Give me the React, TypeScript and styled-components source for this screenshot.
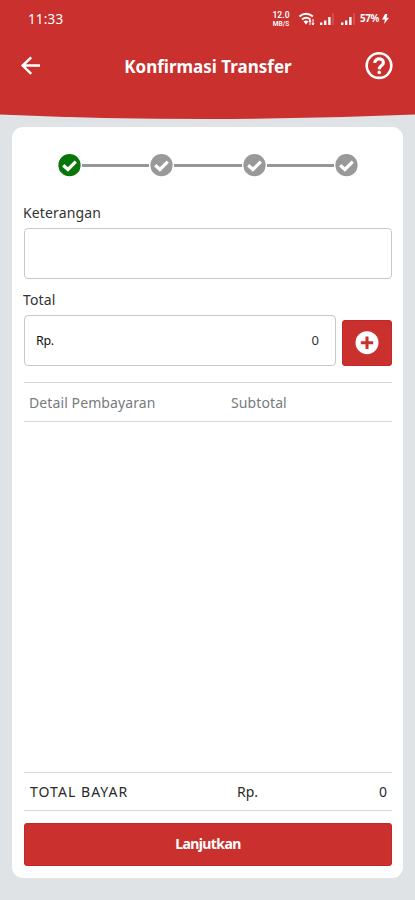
import React from "react";
import styled, { createGlobalStyle } from "styled-components";

const red = "#c9302e";

const GlobalStyle = createGlobalStyle`
  * { box-sizing: border-box; }
  body { margin: 0; background: #dfe3e5; }
  button { font: inherit; border: 0; padding: 0; cursor: pointer; }
`;

const Screen = styled.div`
  width: 415px;
  height: 900px;
  overflow: hidden;
  display: flex;
  flex-direction: column;
  background: #dfe3e5;
  font-family: "Noto Sans", sans-serif;
  color: #333;
`;

const Header = styled.header`
  flex: none;
  height: 119px;
  background: ${red};
  color: #fff;
  clip-path: path("M0 0H415V114.5Q207 123.5 0 114.5Z");
`;

const StatusBar = styled.div`
  height: 38px;
  padding: 0 26px 0 28px;
  display: flex;
  align-items: center;
  justify-content: space-between;
`;

const Clock = styled.span`
  font-size: 13.5px;
  line-height: 18px;
  letter-spacing: 0.15px;
`;

const StatusIcons = styled.div`
  display: flex;
  align-items: center;
  height: 20px;
`;

const Speed = styled.div`
  width: 18px;
  margin-right: 9px;
  display: flex;
  flex-direction: column;
  align-items: center;
  font-family: Roboto, sans-serif;
  font-weight: 600;
`;

const SpeedValue = styled.span`
  font-size: 8.5px;
  line-height: 10px;
`;

const SpeedUnit = styled.span`
  font-size: 6.5px;
  line-height: 8px;
`;

const Battery = styled.span`
  width: 22px;
  font-size: 9.8px;
  font-weight: 700;
  letter-spacing: -0.3px;
  line-height: 14px;
`;

const NavBar = styled.div`
  height: 56px;
  padding: 0 22px 0 20px;
  display: grid;
  grid-template-columns: 30px 1fr 28px;
  align-items: center;
`;

const Title = styled.h1`
  margin: 0;
  padding: 1px 0 0 1px;
  text-align: center;
  font-size: 17px;
  line-height: 24px;
  font-weight: 700;
`;

const IconButton = styled.button`
  display: flex;
  background: none;
  color: #fff;
`;

const Card = styled.main`
  flex: none;
  height: 751px;
  margin: 8px 12px 0;
  padding: 24px 11px 12px 12px;
  border-radius: 11px;
  background: #fff;
  display: flex;
  flex-direction: column;
`;

const Stepper = styled.div`
  height: 28px;
  padding: 0 34px;
  display: flex;
  align-items: center;
`;

const StepLine = styled.i`
  flex: 1;
  height: 3px;
  margin: 0 1px;
  background: #969696;
`;

const StepSvg = styled.svg`
  flex: none;
  width: 23px;
  height: 23px;
`;

const Label = styled.label<{ $top: number }>`
  margin: ${(p) => p.$top}px 0 0 -1px;
  height: 20px;
  font-size: 14px;
  line-height: 20px;
  letter-spacing: 0.15px;
`;

const Field = styled.div`
  height: 51px;
  padding: 0 16px 1px 11px;
  flex: 1;
  display: flex;
  align-items: center;
  justify-content: space-between;
  border: 1px solid #c9c9c9;
  border-radius: 4px;
  font-size: 13px;
`;

const FullField = styled(Field)`
  flex: none;
  margin-top: 5px;
`;

const Currency = styled.span`
  color: #111;
  font-size: 12.5px;
  letter-spacing: -0.4px;
`;

const AmountRow = styled.div`
  display: flex;
  align-items: flex-end;
  gap: 6px;
  margin-top: 5px;
`;

const AddButton = styled.button`
  width: 50px;
  height: 46px;
  display: flex;
  align-items: center;
  justify-content: center;
  border-radius: 4px;
  background: ${red};
  box-shadow: inset 0 0 0 1px #c62626;
`;

const TableRow = styled.div`
  border: solid #d6d8d9;
  border-width: 1px 0;
  display: grid;
  align-items: center;
  font-size: 14px;
`;

const DetailHeader = styled(TableRow)`
  height: 40px;
  margin-top: 16px;
  padding: 0 5px;
  grid-template-columns: 202px 1fr;
  letter-spacing: 0.1px;
  color: #777b7e;
`;

const Summary = styled(TableRow)`
  height: 39px;
  margin-top: auto;
  padding: 0 5px 0 6px;
  grid-template-columns: 207px 1fr auto;
  color: #292929;
`;

const SummaryLabel = styled.span`
  letter-spacing: 1.05px;
`;

const SubmitButton = styled.button`
  margin-top: 12px;
  padding-bottom: 2px;
  height: 43px;
  border-radius: 4px;
  background: ${red};
  box-shadow: inset 0 0 0 1px #c62626;
  color: #fff;
  font-size: 14px;
  font-weight: 700;
  letter-spacing: -0.6px;
`;

const Step = ({ active }: { active?: boolean }) => (
  <StepSvg viewBox="0 0 23 23">
    <circle cx="11.5" cy="11.2" r="11.1" fill={active ? "#087508" : "#999"} />
    <path d="M5.2 11.2L9.9 15.5L17.8 7.6" fill="none" stroke="#fff" strokeWidth="3.2" />
  </StepSvg>
);

const Signal = () => (
  <svg width="21" height="14" viewBox="0 0 21 14">
    <path d="M3.2 13V10.5M7.2 13V8.5M11.4 13V5" stroke="#fff" strokeWidth="2.4" />
    <path d="M15 13V1" stroke="#fff" strokeOpacity=".3" />
  </svg>
);

export default function App() {
  return (
    <>
      <GlobalStyle />
      <Screen>
        <Header>
          <StatusBar>
            <Clock>11:33</Clock>
            <StatusIcons>
              <Speed>
                <SpeedValue>12.0</SpeedValue>
                <SpeedUnit>MB/S</SpeedUnit>
              </Speed>
              <svg width="19" height="14" viewBox="0 0 19 14" fill="none" stroke="#fff">
                <path d="M0.5 4.5Q7 -1 14 4.5M3 7.5Q7.2 4 11.5 7.5" strokeWidth="2" />
                <path d="M4.5 9.5Q7 7.5 9.5 9.5L7 12.5Z" fill="#fff" stroke="none" />
                <path d="M11 13V8M14 7V13M10 10L11 8L12 10M13 11L14 13L15 11" />
              </svg>
              <Signal />
              <Signal />
              <Battery>57%</Battery>
              <svg width="7" height="10" viewBox="0 0 7 10">
                <path d="M3 0L0 5.6H2.8L2.2 10L7 3.8H4.4L5.4 0Z" fill="#fff" />
              </svg>
            </StatusIcons>
          </StatusBar>
          <NavBar>
            <IconButton aria-label="Kembali">
              <svg width="22" height="20" viewBox="0 0 22 20" fill="none" stroke="#fff" strokeWidth="2.5">
                <path d="M20 9.6H3M11.2 1.3L2.7 9.6L11.2 17.9" />
              </svg>
            </IconButton>
            <Title>Konfirmasi Transfer</Title>
            <IconButton aria-label="Bantuan">
              <svg width="28" height="28" viewBox="0 0 28 28" fill="none" stroke="#fff">
                <circle cx="14" cy="13.6" r="12.3" strokeWidth="2.6" />
                <path d="M9.8 11C9.8 5.5 18.4 5.6 18.4 10.7C18.4 13.8 14.3 13.4 14.3 17.2" strokeWidth="3.1" />
                <circle cx="14.2" cy="20.4" r="1.8" fill="#fff" stroke="none" />
              </svg>
            </IconButton>
          </NavBar>
        </Header>
        <Card>
          <Stepper>
            <Step active />
            <StepLine />
            <Step />
            <StepLine />
            <Step />
            <StepLine />
            <Step />
          </Stepper>
          <Label $top={24}>Keterangan</Label>
          <FullField />
          <Label $top={11}>Total</Label>
          <AmountRow>
            <Field>
              <Currency>Rp.</Currency>
              <span>0</span>
            </Field>
            <AddButton aria-label="Tambah">
              <svg width="24" height="24" viewBox="0 0 24 24">
                <circle cx="12" cy="11.7" r="11.5" fill="#fff" />
                <path d="M5.8 11.7H18.2M12 5.5V17.9" stroke={red} strokeWidth="3" />
              </svg>
            </AddButton>
          </AmountRow>
          <DetailHeader>
            <span>Detail Pembayaran</span>
            <span>Subtotal</span>
          </DetailHeader>
          <Summary>
            <SummaryLabel>TOTAL BAYAR</SummaryLabel>
            <span>Rp.</span>
            <span>0</span>
          </Summary>
          <SubmitButton>Lanjutkan</SubmitButton>
        </Card>
      </Screen>
    </>
  );
}
